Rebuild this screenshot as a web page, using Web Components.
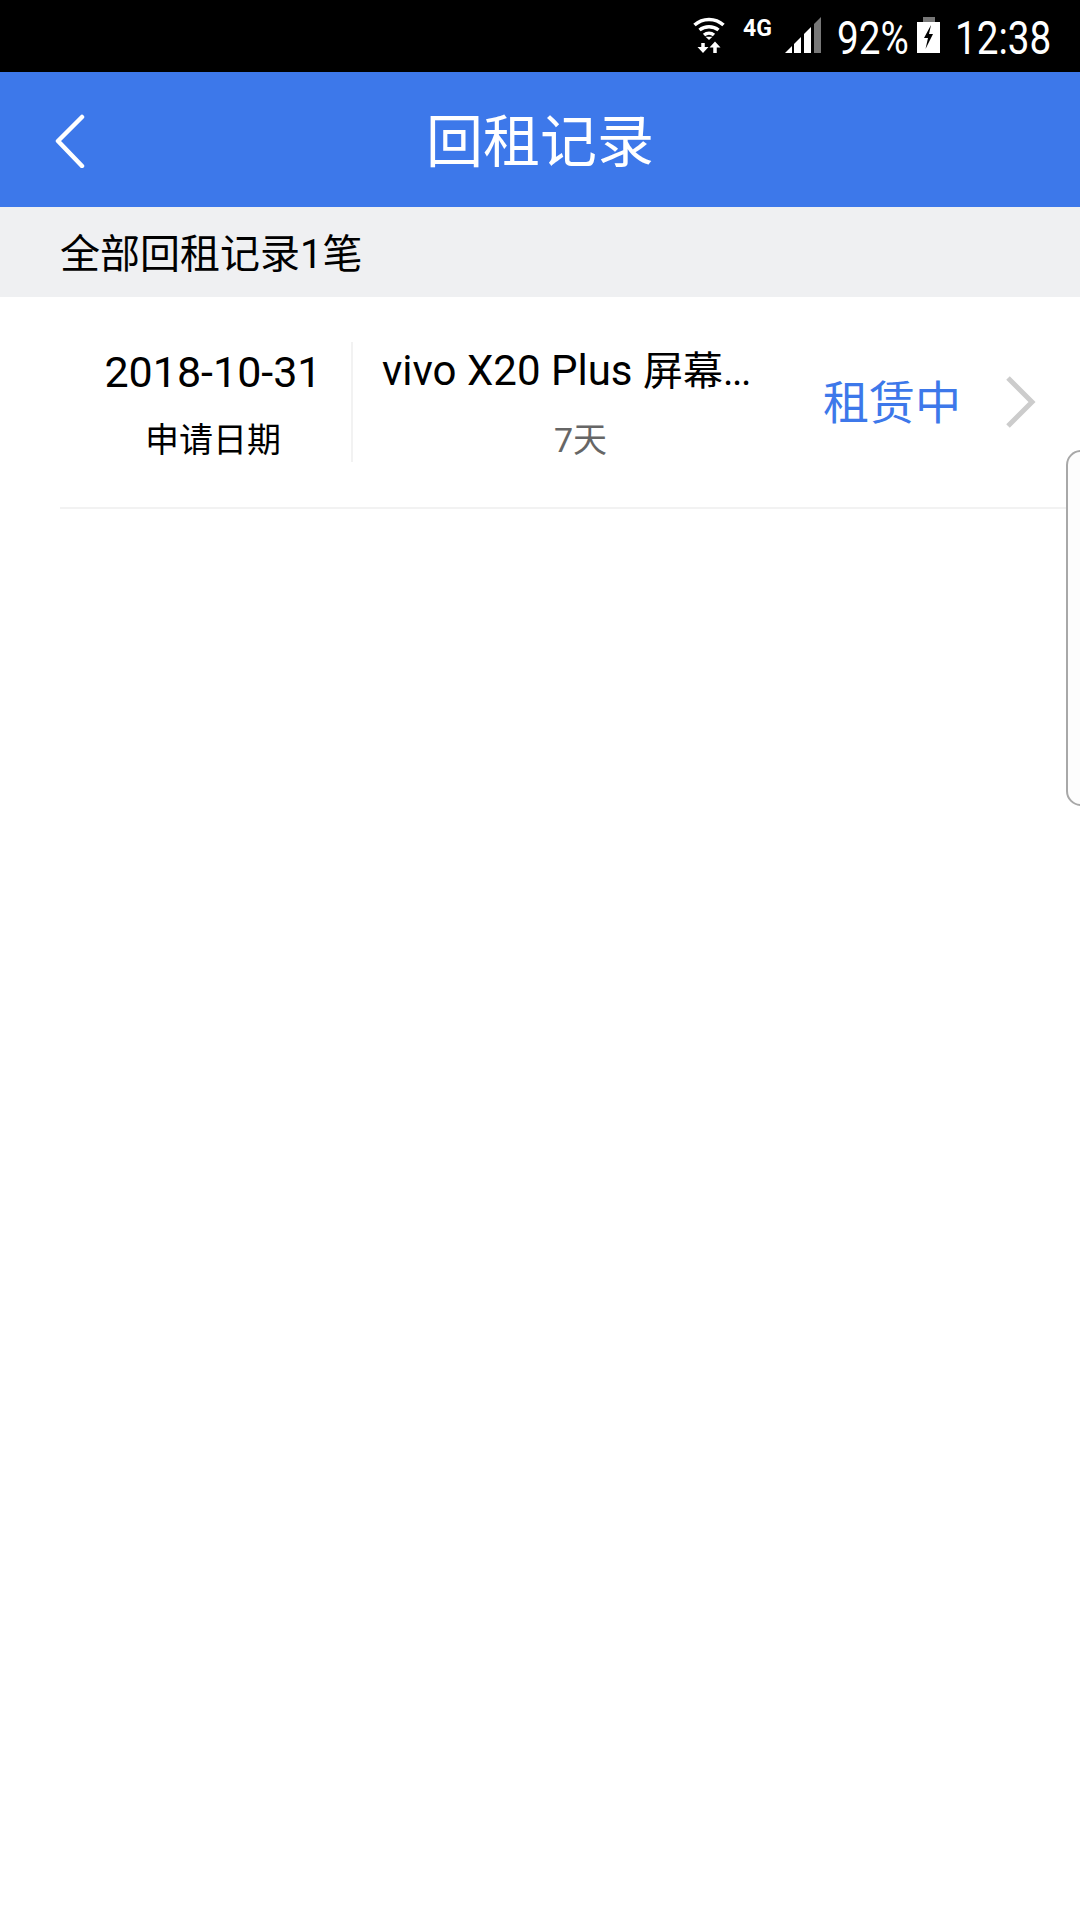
<!DOCTYPE html>
<html lang="zh-CN">
<head>
<meta charset="utf-8">
<style>
  html, body { margin: 0; padding: 0; background: #fff; }
  body { width: 1080px; height: 1920px; position: relative; overflow: hidden; font-family: Roboto, "Noto Sans CJK SC", sans-serif; }
</style>
</head>
<body>
<status-bar battery="92%" time="12:38"></status-bar>
<app-header>回租记录</app-header>
<section-title>全部回租记录1笔</section-title>
<record-row date="2018-10-31" date-label="申请日期" name="vivo X20 Plus " name-cjk="屏幕" days="7天" state="租赁中"></record-row>
<edge-panel></edge-panel>

<script>
(function() {
  class StatusBar extends HTMLElement {
    connectedCallback() {
      const root = this.attachShadow({ mode: 'open' });
      root.innerHTML = `
        <style>
          :host { display: flex; height: 72px; background: #000; color: #fff; justify-content: flex-end; align-items: flex-start; box-sizing: border-box; padding: 17px 27px 0 0; }
          svg { display: block; flex: none; }
          .net { font: 700 23px/19px Roboto, sans-serif; margin: 2px 14px 0 18px; width: 28px; white-space: nowrap; }
          .txt { font: 400 46px/36px Roboto, sans-serif; display: inline-block; transform: scaleX(.84); white-space: nowrap; padding-top: 3px; }
          .pct { width: 70px; margin: 0 10px 0 16px; transform-origin: left center; }
          .clock { width: 98px; margin-left: 15px; transform-origin: left center; }
        </style>
        <svg width="32" height="36" viewBox="0 0 32 36" fill="none" stroke="#fff" stroke-width="3.500">
          <path d="M1.500 8C9.500 .5 22.500 .5 30.500 8"/>
          <path d="M6.500 13C12 8.500 20 8.500 25.500 13"/>
          <path d="M11 18C14 15.500 18 15.500 21 18"/>
          <path d="M16 23l-3.500-3.200h7z" fill="#fff" stroke="none"/>
          <path d="M10 26v5M22 36v-7" stroke-width="3.500"/>
          <path d="M4.500 30h11L10 36zM16.500 30.500L22 24.500l5.500 6z" fill="#fff" stroke="none"/>
        </svg>
        <div class="net">4G</div>
        <svg width="36" height="36" viewBox="0 0 36 36">
          <path d="M0 36L7 29V36Z" fill="#fff"/>
          <path d="M9 27L16 20V36H9Z" fill="#fff"/>
          <path d="M19 17L26 10V36H19Z" fill="#fff"/>
          <path d="M29 7L36 0V36H29Z" fill="#777"/>
        </svg>
        <div class="txt pct">${this.getAttribute('battery')}</div>
        <svg width="23" height="36" viewBox="0 0 23 36">
          <path d="M6 0H18V5H6Z" fill="#777"/>
          <path d="M0 5H23V36H0Z" fill="#fff"/>
          <path d="M14 8L7 21H11L8.500 32L16 17H12Z" fill="#000"/>
        </svg>
        <div class="txt clock">${this.getAttribute('time')}</div>
      `;
    }
  }

  class AppHeader extends HTMLElement {
    connectedCallback() {
      const root = this.attachShadow({ mode: 'open' });
      root.innerHTML = `
        <style>
          :host { display: flex; position: relative; height: 135px; background: #3d78ea; color: #fff; align-items: center; justify-content: center; font-size: 57px; box-sizing: border-box; padding-bottom: 5px; }
          svg { position: absolute; left: 54px; top: 42px; }
        </style>
        <svg width="32" height="54" viewBox="0 0 32 54" fill="none" stroke="#fff" stroke-width="4.500" stroke-linecap="round" stroke-linejoin="round">
          <path d="M28 3L4 27L28 52"/>
        </svg>
        <slot></slot>
      `;
    }
  }

  class SectionTitle extends HTMLElement {
    connectedCallback() {
      const root = this.attachShadow({ mode: 'open' });
      root.innerHTML = `
        <style>
          :host { display: flex; height: 90px; box-sizing: border-box; padding: 0 0 2px 60px; background: #eff0f2; color: #000; align-items: center; font-size: 40px; }
        </style>
        <slot></slot>
      `;
    }
  }

  class RecordRow extends HTMLElement {
    connectedCallback() {
      const root = this.attachShadow({ mode: 'open' });
      root.innerHTML = `
        <style>
          :host { display: flex; height: 212px; box-sizing: border-box; margin-left: 60px; border-bottom: 2px solid #f2f2f2; align-items: center; color: #000; }
          .col { display: flex; flex-direction: column; align-items: center; height: 120px; box-sizing: border-box; padding-top: 2px; justify-content: center; gap: 23px; }
          .date { width: 293px; padding-left: 15px; border-right: 2px solid #f2f2f2; }
          .info { width: 397px; margin-left: 29px; align-items: stretch; text-align: center; }
          .big { font-size: 43px; line-height: 50px; white-space: nowrap; }
          .info .big { text-align: left; font-size: 42px; }
          .cjk { font-size: 40px; }
          .dots { font-size: 40px; letter-spacing: -1.500px; }
          .small { font-size: 34px; line-height: 40px; white-space: nowrap; }
          .gray { color: #666; }
          .state { color: #3d78ea; font-size: 46px; line-height: 54px; margin: 2px 0 0 44px; white-space: nowrap; }
          svg { margin-left: 45px; display: block; flex: none; }
        </style>
        <div class="col date">
          <div class="big">${this.getAttribute('date')}</div>
          <div class="small">${this.getAttribute('date-label')}</div>
        </div>
        <div class="col info">
          <div class="big">${this.getAttribute('name')}<span class="cjk">${this.getAttribute('name-cjk')}</span><span class="dots">...</span></div>
          <div class="small gray">${this.getAttribute('days')}</div>
        </div>
        <div class="state">${this.getAttribute('state')}</div>
        <svg width="30" height="52" viewBox="0 0 30 52" fill="none" stroke="#cccccc" stroke-width="5">
          <path d="M2 2L26 26L2 50"/>
        </svg>
      `;
    }
  }

  class EdgePanel extends HTMLElement {
    connectedCallback() {
      const root = this.attachShadow({ mode: 'open' });
      root.innerHTML = `
        <style>
          :host { display: block; position: absolute; left: 1066px; top: 450px; width: 30px; height: 356px; box-sizing: border-box; background: #fdfdfd; border: 2px solid #a8a8a8; border-radius: 16px; }
        </style>
      `;
    }
  }

  customElements.define('status-bar', StatusBar);
  customElements.define('app-header', AppHeader);
  customElements.define('section-title', SectionTitle);
  customElements.define('record-row', RecordRow);
  customElements.define('edge-panel', EdgePanel);
})();
</script>
</body>
</html>
